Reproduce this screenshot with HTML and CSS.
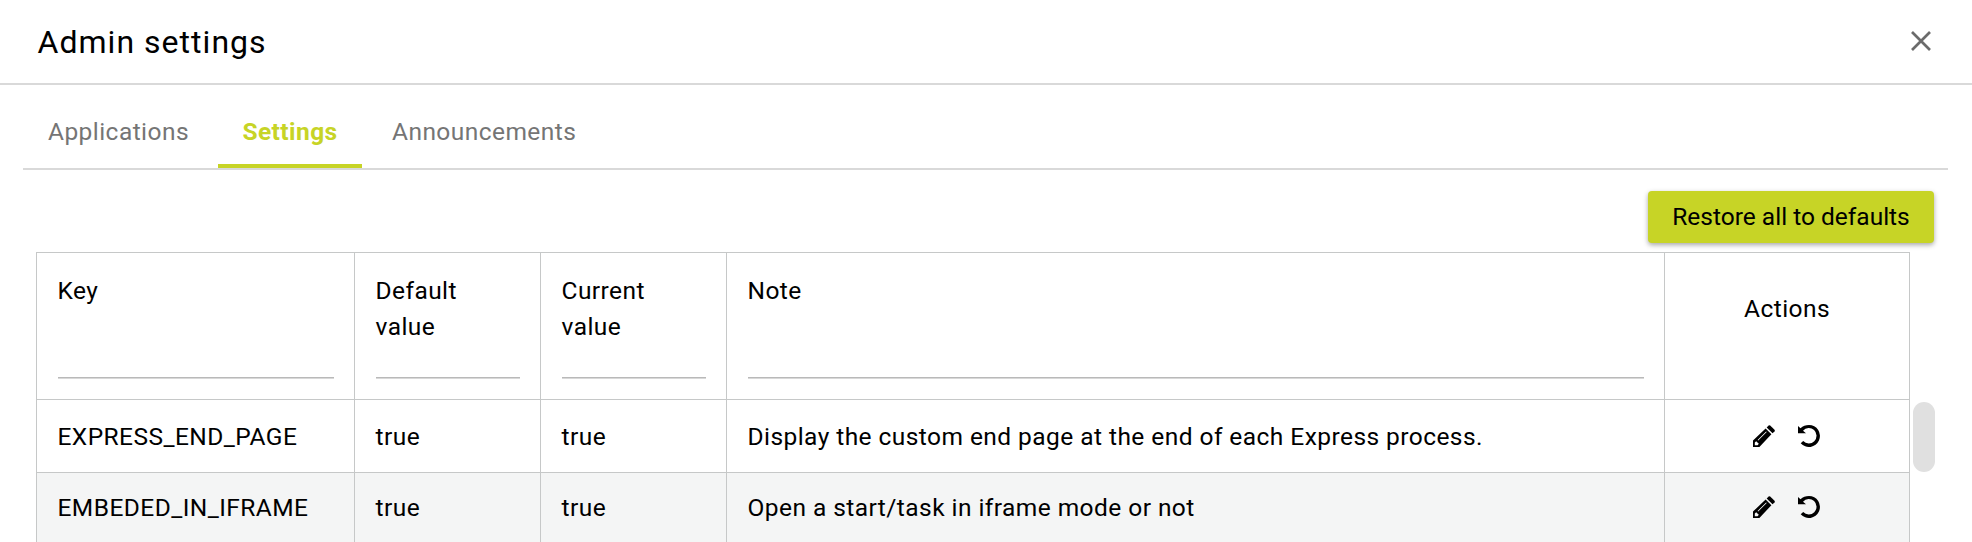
FILE: index.html
```html
<!DOCTYPE html>
<html lang="en">
<head>
<meta charset="utf-8">
<title>Admin settings</title>
<link rel="stylesheet" href="styles.css">
</head>
<body>
<svg class="sprite" width="0" height="0" aria-hidden="true">
  <symbol id="pencil" viewBox="0 0 22 22">
    <path fill-rule="evenodd" d="M0 22V15.600L12.600 3.400L18.400 9.200L6.400 22ZM1.800 17.600V20.200H4.600L5.800 18.800L3.200 16.200ZM4.600 14.900L5.200 15.500L13.700 7L13.100 6.400Z"/>
    <path d="M13.700 2.500L15.600 .5Q16.400-.2 17.200.5L21.500 4.800Q22.200 5.600 21.500 6.400L19.500 8.300Z"/>
  </symbol>
  <symbol id="undo" viewBox="0 0 22 22">
    <path d="M0 .9L2.500 3.300Q6 0 11 0A11 11 0 1 1 2.700 18.300L5.200 16A7.700 7.700 0 1 0 5 5.700L8 8.300H0Z"/>
  </symbol>
</svg>
<header class="dialog-header">
  <h1 class="dialog-title">Admin settings</h1>
  <svg class="close" viewBox="0 0 20 20"><path d="M1 1L19 19M19 1L1 19"/></svg>
</header>
<nav class="tabs">
  <a class="tab">Applications</a>
  <a class="tab active">Settings</a>
  <a class="tab">Announcements</a>
</nav>
<div class="toolbar"><button class="restore">Restore all to defaults</button></div>
<div class="content">
  <div class="table">
    <div class="row head">
      <div class="cell"><span>Key</span><i class="filter"></i></div>
      <div class="cell"><span>Default value</span><i class="filter"></i></div>
      <div class="cell"><span>Current value</span><i class="filter"></i></div>
      <div class="cell"><span>Note</span><i class="filter"></i></div>
      <div class="cell actions-title">Actions</div>
    </div>
    <div class="row">
      <div class="cell">EXPRESS_END_PAGE</div>
      <div class="cell">true</div>
      <div class="cell">true</div>
      <div class="cell">Display the custom end page at the end of each Express process.</div>
      <div class="cell actions"><svg><use href="#pencil"/></svg><svg><use href="#undo"/></svg></div>
    </div>
    <div class="row even">
      <div class="cell">EMBEDED_IN_IFRAME</div>
      <div class="cell">true</div>
      <div class="cell">true</div>
      <div class="cell">Open a start/task in iframe mode or not</div>
      <div class="cell actions"><svg><use href="#pencil"/></svg><svg><use href="#undo"/></svg></div>
    </div>
  </div>
  <div class="scroll-thumb"></div>
</div>
</body>
</html>
```

FILE: styles.css
```css
* { box-sizing: border-box; }
body {
  margin: 0;
  height: 542px;
  overflow: hidden;
  background: #fff;
  color: #000;
  font: 24.5px/36px Roboto, sans-serif;
  letter-spacing: 0.44px;
}
.sprite { display: block; }
.dialog-header {
  display: flex;
  justify-content: space-between;
  align-items: center;
  height: 85px;
  padding: 0 41px 2px 37.5px;
  border-bottom: 2px solid #d9d9d9;
}
.dialog-title {
  margin: 2px 0 0;
  font-size: 32px;
  line-height: 46px;
  font-weight: 400;
  letter-spacing: 1.03px;
}
.close {
  width: 20px;
  height: 20px;
  fill: none;
  stroke: #6b6b6b;
  stroke-width: 2.7;
}
.tabs {
  display: flex;
  height: 85px;
  margin: 0 24px 0 23px;
  padding-left: 1px;
  border-bottom: 2px solid #d9d9d9;
}
.tab {
  padding: 29px 30px 0 30px;
  height: 83px;
  color: #757575;
}
.tab:first-child { width: 194px; padding: 29px 0 0 24px; }
.tab.active {
  width: 144px;
  padding: 29px 0 0;
  text-align: center;
  border-bottom: 4px solid #c7d426;
  color: #c7d426;
  font-weight: 700;
}
.toolbar {
  display: flex;
  justify-content: flex-end;
  height: 82px;
  padding: 21px 38px 0 0;
}
.restore {
  width: 286px;
  height: 52px;
  padding: 0;
  border: 0;
  border-radius: 4px;
  background: #c7d426;
  box-shadow: 0 2px 5px rgba(0, 0, 0, 0.35);
  color: #000;
  font: inherit;
  letter-spacing: 0;
}
.content { display: flex; padding-left: 36px; }
.table {
  width: 1874px;
  border-top: 1px solid #c6c8c8;
  border-left: 1px solid #c6c8c8;
}
.row {
  display: grid;
  grid-template-columns: 318px 186px 186px 938px 245px;
  height: 73px;
}
.row.head { height: 147px; }
.row.even { background: #f4f5f5; }
.cell {
  padding: 19px 20.5px 0;
  border-right: 1px solid #c6c8c8;
  border-bottom: 1px solid #c6c8c8;
}
.even .cell { padding-top: 17px; }
.head .cell {
  display: flex;
  flex-direction: column;
  justify-content: space-between;
  padding: 20px 20.5px;
}
.filter { height: 2px; background: linear-gradient(#b9b9b9 50%, #d8d8d8 50%); }
.head .actions-title { justify-content: flex-start; padding-top: 38px; text-align: center; }
.cell.actions {
  display: flex;
  justify-content: center;
  gap: 23px;
  padding: 25px 22px 0 20px;
}
.even .cell.actions { padding-top: 23px; }
.actions svg { width: 22px; height: 22px; }
.scroll-thumb {
  width: 22px;
  height: 70px;
  margin: 150px 0 0 3px;
  border-radius: 11px;
  background: #e0e0e0;
}
```
